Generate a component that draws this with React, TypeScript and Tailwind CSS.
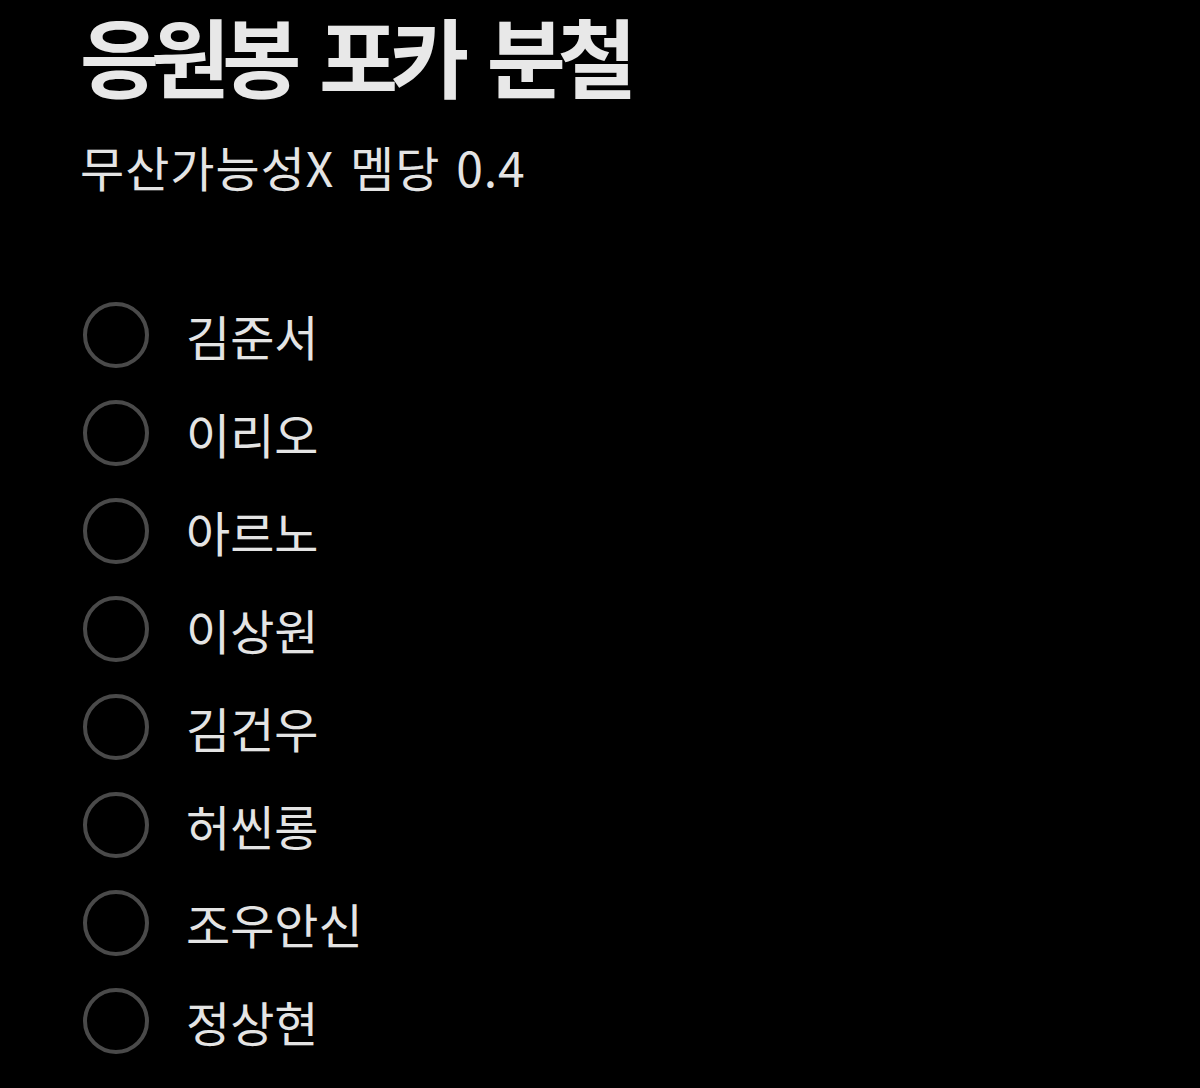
const members = ['김준서', '이리오', '아르노', '이상원', '김건우', '허씬롱', '조우안신', '정상현']

function RadioRow({ name }: { name: string }) {
  return (
    <label className="flex items-center h-[98px] cursor-pointer">
      <span className="w-[66px] h-[66px] rounded-full border-[4px] border-[#4a4a4a] flex-shrink-0" />
      <span className="ml-[37px] text-[48px] text-[#e4e4e4] leading-none">{name}</span>
    </label>
  )
}

export default function App() {
  return (
    <div
      className="w-[1200px] h-[1088px] bg-black overflow-hidden"
      style={{ fontFamily: '"Noto Sans CJK KR", "Noto Sans", sans-serif' }}
    >
      <div className="pl-[80px]">
        <h1 className="-mt-[8px] text-[86px] font-bold tracking-[-8px] [word-spacing:14px] text-[#e8e8e8] leading-[126px]">
          응원봉 포카 분철
        </h1>
        <p className="mt-[18px] text-[48px] tracking-[1px] [word-spacing:4px] text-[#e4e4e4] leading-[60px]">
          무산가능성X 멤당 0.4
        </p>
      </div>
      <div className="pl-[83px] mt-[90px]">
        {members.map((m) => (
          <RadioRow key={m} name={m} />
        ))}
      </div>
    </div>
  )
}
